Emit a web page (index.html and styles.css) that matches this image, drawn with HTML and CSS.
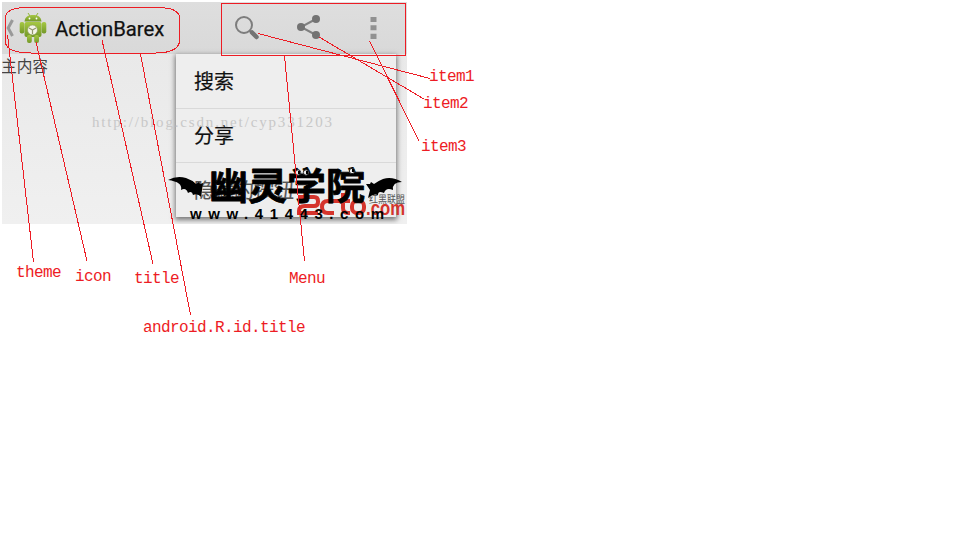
FILE: index.html
```
<!DOCTYPE html>
<html lang="zh-CN">
<head>
<meta charset="utf-8">
<title>ActionBarex</title>
<link rel="stylesheet" href="styles.css">
</head>
<body>
<main class="phone">
  <header class="bar">
    <svg class="back" viewBox="0 0 8 18"><path d="M6.500 1 2.200 9l4.300 8"/></svg>
    <svg class="robot" viewBox="0 0 28 32">
      <defs><linearGradient id="green" x2="0" y2="1"><stop stop-color="#a6c843"/><stop offset="1" stop-color="#739829"/></linearGradient></defs>
      <g fill="url(#green)">
        <path d="M5.500 9.500C6 5 9 3 14 3s8 2 8.500 6.500z"/>
        <rect x="5.500" y="10" width="17" height="15" rx="2"/>
        <rect x=".7" y="10" width="4.600" height="11.500" rx="2"/>
        <rect x="22.700" y="10" width="4.600" height="11.500" rx="2"/>
        <rect x="8" y="23" width="4.800" height="8" rx="2"/>
        <rect x="15.200" y="23" width="4.800" height="8" rx="2"/>
      </g>
      <path d="m9 1 2 3m8-3-2 3" stroke="#91b536"/>
      <circle cx="10.500" cy="6.500" r=".9" fill="#fff"/><circle cx="17.500" cy="6.500" r=".9" fill="#fff"/>
      <circle cx="13.500" cy="18" r="5" fill="#f4f4e8" stroke="#8c9f59" stroke-width=".7"/>
      <path d="M13.500 18v4m0-4-3.500-2m3.500 2 3.500-2" stroke="#92966e" stroke-width="1.200"/>
    </svg>
    <h1 class="title">ActionBarex</h1>
    <nav class="actions">
      <svg class="action" viewBox="0 0 28 28"><circle cx="12" cy="11" r="8" fill="none" stroke="#7d7d7d" stroke-width="2"/><path d="m17.500 16.500 3 3" stroke="#7d7d7d" stroke-width="2"/><path d="m20 18.500 4.500 4.500" stroke="#737373" stroke-width="4.500" stroke-linecap="round"/></svg>
      <svg class="action" viewBox="0 0 28 28"><path d="M20 5 5 13l15 8" fill="none" stroke="#808080" stroke-width="2"/><g fill="#737373"><circle cx="20" cy="5" r="4"/><circle cx="5" cy="13" r="4"/><circle cx="20" cy="21" r="4"/></g></svg>
      <svg class="action" viewBox="0 0 28 28"><path d="M10.500 3h6v5h-6zm0 8.300h6v5h-6zm0 8.400h6v5.300h-6z" fill="#919191"/></svg>
    </nav>
  </header>
  <section class="content">
    <p class="main-text">主内容</p>
    <ul class="menu">
      <li class="item">搜索</li>
      <li class="item">分享</li>
      <li class="item">隐藏的按钮</li>
    </ul>
  </section>
</main>
<svg class="overlay" viewBox="0 0 960 540">
  <text class="url" x="92" y="127" textLength="240">http://blog.csdn.net/cyp331203</text>
  <g class="red-mark">
    <g class="red-shape">
      <path d="M298 197h16q4 0 4 4v1q0 4-4 4h-9q-6 0-6 5v2h19"/>
      <path d="M338 201h-10q-6 0-6 6t6 6h6"/>
      <path d="M343 193v15q0 5 5 5h2M338 201h12"/>
      <rect x="352" y="201" width="12" height="12" rx="5"/>
    </g>
    <text class="dotcom" x="366" y="215" textLength="39" lengthAdjust="spacingAndGlyphs">.com</text>
    <text class="alliance" x="369" y="203" textLength="36" lengthAdjust="spacingAndGlyphs">红黑联盟</text>
  </g>
  <g class="black-mark">
    <text class="school" x="209" y="200" textLength="156" lengthAdjust="spacingAndGlyphs">幽灵学院</text>
    <path d="M168 180Q177 175 186 178Q192 180 196 184L199 182L200 184L203 183L201 197Q198 193 193 195Q192 190 188 193Q186 187 181 190Q183 182 168 180Z"/>
    <path d="M402 182Q392 176 383 179Q378 181 374 184L371 182L370 184L366 184L370 190L368 198Q373 193 378 195Q378 190 384 193Q386 187 393 190Q392 182 402 182Z"/>
    <g class="eyes"><circle cx="298" cy="172.500" r="2.700"/><circle cx="306" cy="172.500" r="2.700"/><circle cx="352" cy="171" r="2.700"/></g>
    <path d="M298 171h2v3h-2zm8 0h2v3h-2zm46-2h2v3h-2z"/>
    <text class="site" x="190" y="219" textLength="194">www.41443.com</text>
  </g>
  <g class="lines">
    <path d="M27 7.500h130c15 0 22 3 22.500 10v23c0 7-7 12.500-24 12.500H31C15 53 5.500 49 5.500 42V18C5.500 11 14 7.500 27 7.500z"/>
    <rect x="221.500" y="3.500" width="184" height="52"/>
    <path d="m7.500 35 26 227M36 42l51 219M102 40l51 224M140.500 54l50 261M284.500 56l20 205M258 33.500l172 45M319 37l105 62M369.500 41l49.500 100"/>
  </g>
  <g class="labels">
    <text x="16" y="277">theme</text>
    <text x="75" y="281">icon</text>
    <text x="134" y="283">title</text>
    <text x="143" y="332">android.R.id.title</text>
    <text x="289" y="283">Menu</text>
    <text x="429" y="81">item1</text>
    <text x="423" y="108">item2</text>
    <text x="421" y="151">item3</text>
  </g>
</svg>
</body>
</html>
```
FILE: styles.css
```
* { box-sizing: border-box; }
body { margin: 0; height: 540px; padding: 2px; overflow: hidden; background: #fff; font-family: Roboto, "Noto Sans CJK SC", sans-serif; }
.phone { width: 405px; height: 222px; overflow: hidden; background: #eee; }
.bar { display: flex; align-items: center; height: 52px; padding-left: 4px; background: linear-gradient(#dedede, #d9d9d9); box-shadow: 0 1px 3px #aaa; }
.back { width: 8px; height: 18px; fill: none; stroke: #999; stroke-width: 3; }
.robot { width: 28px; height: 32px; margin-left: 5px; fill: none; }
.title { margin: 1px 0 0 8px; font-size: 20.3px; font-weight: 400; line-height: 24px; color: #111; -webkit-text-stroke: .25px #111; }
.actions { display: flex; gap: 36px; margin: 0 19px 0 auto; }
.action { width: 28px; height: 28px; }
.content { display: flex; height: 170px; background: linear-gradient(#e9e9e9, #f0f0f0); }
.main-text { width: 174px; margin: 0 0 0 -1px; padding-top: 1px; font-size: 15.7px; line-height: 23px; color: #444; }
.menu { width: 220px; height: 163px; margin: 0 0 0 1px; padding: 0; list-style: none; background: #eee; box-shadow: 0 2px 5px 1px #777; }
.item { display: flex; align-items: center; height: 55px; padding: 1px 0 0 18px; border-bottom: 1px solid #d9d9d9; font-size: 20px; line-height: 28px; color: #111; -webkit-text-stroke: .2px; }
.item:nth-child(2) { height: 54px; }
.item:last-child { height: 54px; border: 0; color: #555; }
.overlay { position: absolute; top: 0; left: 0; width: 960px; height: 540px; }
.url { font: 15px "Liberation Serif", serif; fill: #c8c8c8; }
.red-mark { fill: #d5342c; }
.red-shape { fill: none; stroke: #d5342c; stroke-width: 4; }
.dotcom { font: bold 21px "Liberation Sans", sans-serif; }
.alliance { font: 10px "Noto Sans CJK SC", sans-serif; fill: #555; }
.black-mark { fill: #000; }
.school { font: 700 37px "Noto Sans CJK SC", sans-serif; stroke: #000; stroke-width: .8; stroke-linejoin: round; }
.eyes { fill: #eee; stroke: #222; }
.site { font: bold 15px "Liberation Sans", sans-serif; }
.lines { fill: none; stroke: #ed1c24; stroke-width: 1; shape-rendering: crispEdges; }
.labels { font: 16px "Liberation Mono", monospace; letter-spacing: -.6px; fill: #ed1c24; }
```
